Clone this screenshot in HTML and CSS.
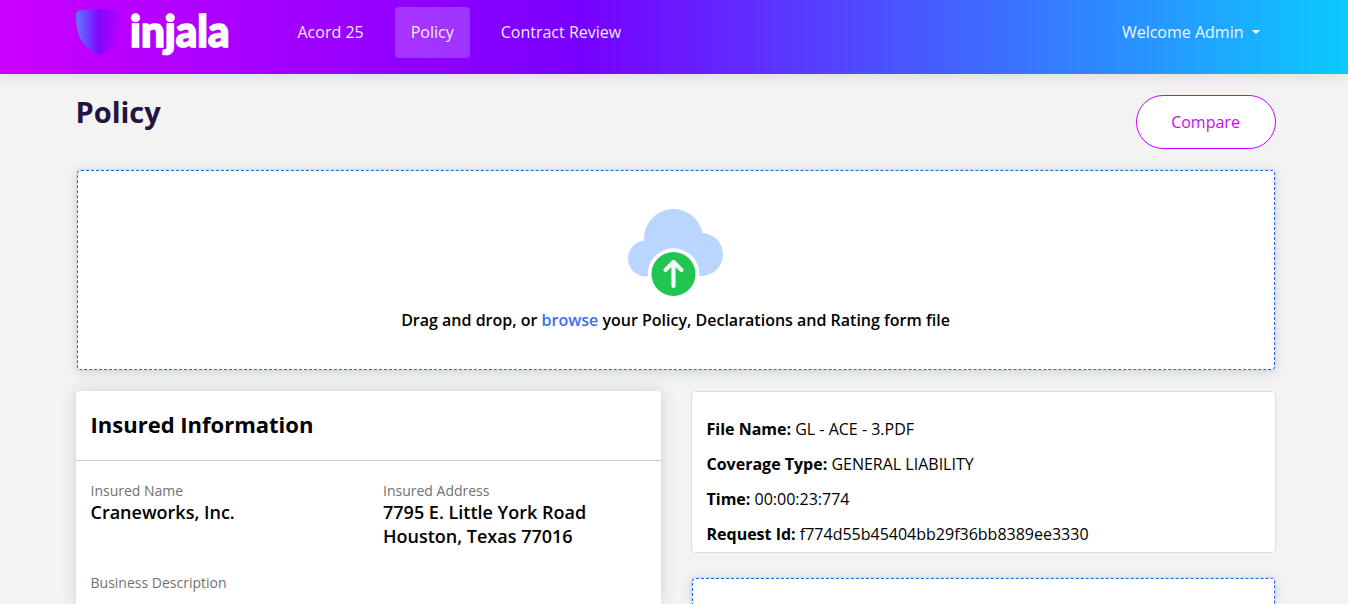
FILE: index.html
```html
<!DOCTYPE html>
<html lang="en">
<head>
<meta charset="utf-8">
<title>Policy</title>
<link rel="stylesheet" href="styles.css">
</head>
<body>
<header class="topbar">
  <div class="container topbar-inner">
    <a class="brand" aria-label="injala">
      <svg width="160" height="64" viewBox="0 0 160 64">
        <defs><linearGradient id="shield"><stop offset="0" stop-color="#5f7bff"/><stop offset=".5" stop-color="#8008ff"/><stop offset="1" stop-color="#b800fc"/></linearGradient></defs>
        <path d="M3.500 10.500Q22 7.500 41 10.500Q44.500 11.200 44.300 15C44.200 36 37 49 22.300 55C7 48 0 37 0 15Q0 11.200 3.500 10.500Z" fill="url(#shield)"/>
        <text class="brand-text" x="54" y="46.500" textLength="99.500" lengthAdjust="spacingAndGlyphs">injala</text>
        <rect x="156" y="43.500" width="2" height="3" rx="1" fill="none" stroke="#7d20e8" stroke-width=".6"/>
      </svg>
    </a>
    <nav class="nav">
      <a class="nav-link">Acord 25</a>
      <a class="nav-link active">Policy</a>
      <a class="nav-link">Contract Review</a>
    </nav>
    <a class="user-menu">Welcome Admin<span class="caret"></span></a>
  </div>
</header>
<main class="container">
  <div class="page-head">
    <h1 class="title">Policy</h1>
    <button class="compare">Compare</button>
  </div>
  <section class="upload">
    <div class="dropzone">
      <svg class="cloud" width="96" height="88" viewBox="0 0 96 88">
        <g fill="#bbd6fe"><circle cx="45.500" cy="29.500" r="29.500"/><circle cx="18" cy="49.500" r="18"/><circle cx="73.500" cy="45.500" r="21.500"/><rect x="18" y="32" width="55.500" height="35"/></g>
        <circle cx="45.500" cy="65" r="25.800" fill="#fff"/>
        <circle cx="45.500" cy="65" r="22" fill="#22c552"/>
        <path d="M45.500 77V53M37.500 61L45.500 53L53.500 61" fill="none" stroke="#f4f7f5" stroke-width="4.200" stroke-linecap="round" stroke-linejoin="round"/>
      </svg>
      <p class="drop-text">Drag and drop, or <span class="browse">browse</span> your Policy, Declarations and Rating form file</p>
    </div>
  </section>
  <div class="columns">
    <section class="insured">
      <h2 class="insured-title">Insured Information</h2>
      <div class="fields">
        <div><div class="label">Insured Name</div><div class="value">Craneworks, Inc.</div></div>
        <div><div class="label">Insured Address</div><div class="value">7795 E. Little York Road<br>Houston, Texas 77016</div></div>
        <div><div class="label">Business Description</div></div>
      </div>
    </section>
    <div class="side">
      <section class="file-info">
        <p class="row"><b>File Name:</b> GL - ACE - 3.PDF</p>
        <p class="row"><b>Coverage Type:</b> GENERAL LIABILITY</p>
        <p class="row"><b>Time:</b> 00:00:23:774</p>
        <p class="row"><b>Request Id:</b> f774d55b45404bb29f36bb8389ee3330</p>
      </section>
      <section class="upload upload-next"><div class="dropzone"></div></section>
    </div>
  </div>
</main>
</body>
</html>
```
FILE: styles.css
```css
* { box-sizing: border-box; }
html, body { height: 100%; }
body { display: flex; flex-direction: column; margin: 0; overflow: hidden; background: #f3f3f3; color: #000; font: 16px/24px "Open Sans", "Noto Sans", sans-serif; }
h1, h2, p { margin: 0; }
.container { width: 1200px; margin-left: 75.500px; }
main.container { flex: 1; min-height: 0; display: flex; flex-direction: column; }
.topbar { flex: none; height: 74px; background: linear-gradient(90deg, #cb00ff 0%, #7800ff 43%, #0bcaff 100%); box-shadow: 0 2px 16px rgba(0, 0, 0, .1); }
.topbar-inner { display: flex; align-items: flex-start; }
.brand { display: block; width: 160px; height: 64px; margin-left: .5px; }
.brand-text { font: 900 43px Lato, sans-serif; fill: #fff; stroke: #fff; stroke-width: 1.700px; }
.nav { display: flex; margin: 7px 0 0 46px; }
.nav-link { height: 51px; padding: 13px 16px; margin-right: 15px; border-radius: 4px; color: #f4e6ff; }
.nav-link:first-child { padding-left: 15.500px; }
.nav-link.active { background: rgba(255, 255, 255, .2); }
.nav-link:last-child { margin-right: 0; }
.user-menu { display: flex; align-items: center; gap: 8.500px; margin: 20px 15.500px 0 auto; color: #e9f8ff; }
.caret { border: 4px solid transparent; border-top-color: #fff; border-bottom: 0; }
.page-head { flex: none; display: flex; justify-content: space-between; height: 95px; padding-top: 21px; }
.title { margin-top: -1px; font-size: 29px; line-height: 35px; font-weight: 700; color: #241442; }
.compare { width: 140px; height: 54px; border: 1px solid #c800ff; border-radius: 27px; background: #fff; color: #c80af5; font: inherit; }
.upload { flex: none; border: 1px solid #d8d8d8; border-radius: 4px; background: #fff; box-shadow: 0 2px 12px rgba(0, 0, 0, .12); }
.dropzone { height: 200px; border: 1px dashed #2067f0; border-radius: 4px; display: flex; flex-direction: column; align-items: center; padding-top: 38px; }
.drop-text { font-weight: 600; margin-top: 11px; }
.browse { color: #3c70ec; }
.columns { flex: 1; min-height: 0; display: grid; grid-template-columns: 585px 585px; grid-template-rows: 100%; gap: 30px; margin-top: 20px; }
.insured { border-radius: 4px 4px 0 0; background: #fff; box-shadow: 0 0 16px rgba(0, 0, 0, .15); }
.insured-title { height: 70px; padding: 19px 15px; border-bottom: 1px solid #c8c8c8; font-size: 22px; line-height: 29px; font-weight: 700; }
.fields { display: grid; grid-template-columns: 1fr 1fr; row-gap: 24px; padding-top: 19px; }
.fields > div { padding-left: 15px; }
.label { font-size: 14px; line-height: 21px; color: #727272; }
.value { margin-top: -1px; font-size: 18px; line-height: 24px; font-weight: 600; }
.side { display: flex; flex-direction: column; min-height: 0; }
.file-info { flex: none; height: 162px; padding: 25px 15px 0; border: 1px solid #dedede; border-radius: 4px; background: #fff; margin-bottom: 24px; }
.row { line-height: 24px; margin-bottom: 11px; }
.upload-next { flex: 1; min-height: 0; border-bottom: 0; border-radius: 4px 4px 0 0; }
.upload-next .dropzone { height: 100%; padding: 0; border-bottom: 0; border-radius: 4px 4px 0 0; }
```
